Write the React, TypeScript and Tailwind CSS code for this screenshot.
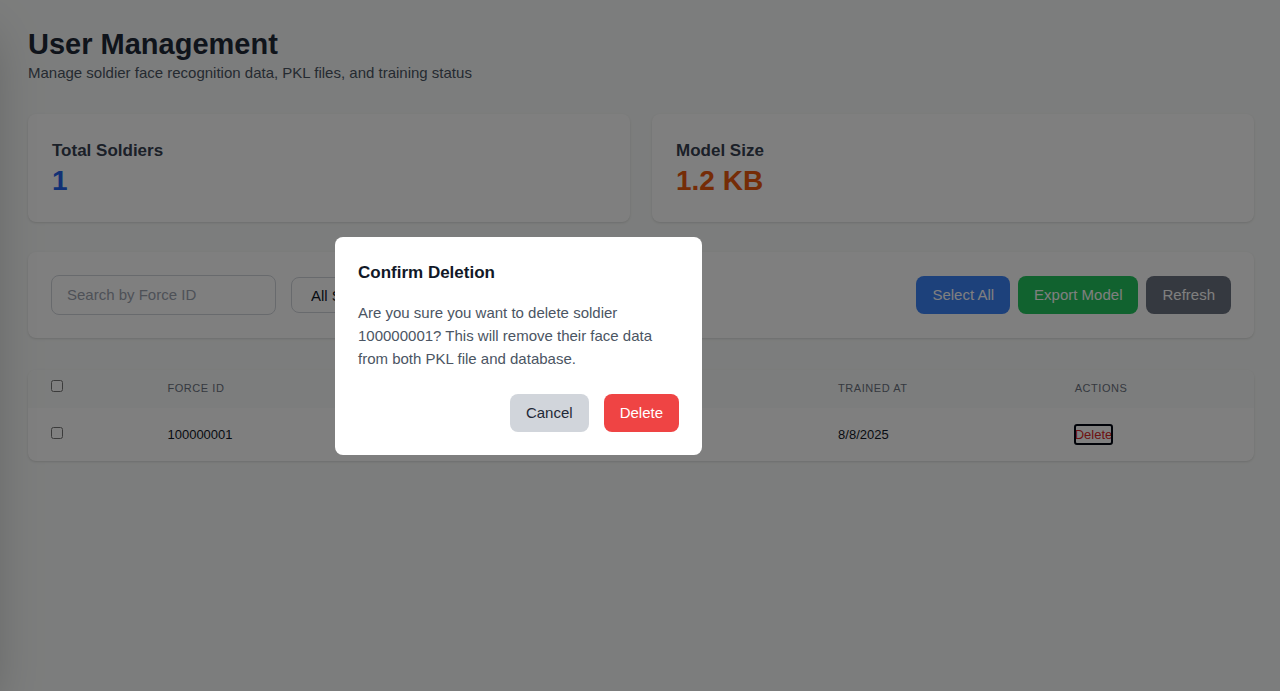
import { useState } from "react";

const card = "rounded-lg bg-white shadow";
const button = "h-[38px] rounded-lg px-4 text-[15px] leading-[22px]";

function StatCard({ label, value, tone }: { label: string; value: string; tone: string }) {
  return (
    <section className={`${card} p-6`}>
      <h2 className="text-[17px] leading-[26px] font-semibold text-[#374151]">{label}</h2>
      <p className={`text-[28px] leading-[34px] font-bold ${tone}`}>{value}</p>
    </section>
  );
}

const soldiers = [{ id: "100000001", status: "Trained", trainedAt: "8/8/2025" }];

export default function App() {
  const [search, setSearch] = useState("");
  const [open, setOpen] = useState(true);
  const th = "px-[23px] text-left text-[11px] font-normal uppercase tracking-wider text-[#6b7280]";
  const td = "px-[23px] text-[13px] text-[#111827]";

  return (
    <div className="relative min-h-screen overflow-hidden bg-[#f9fbfa] font-['Liberation_Sans',Arial,sans-serif]">
      <div className="absolute inset-y-0 right-full w-60 shadow-2xl" />
      <main className="pt-[26px] pr-[26px] pb-8 pl-7">
        <header>
          <h1 className="text-[29px] leading-9 font-bold text-[#1f2937]">User Management</h1>
          <p className="text-[15px] leading-[22px] text-[#4b5563]">
            Manage soldier face recognition data, PKL files, and training status
          </p>
        </header>

        <div className="mt-[30px] grid grid-cols-2 gap-[22px]">
          <StatCard label="Total Soldiers" value="1" tone="text-[#2563eb]" />
          <StatCard label="Model Size" value="1.2 KB" tone="text-[#ea580c]" />
        </div>

        <section className={`${card} mt-[30px] flex items-center justify-between p-[23px]`}>
          <div className="flex items-center gap-[15px]">
            <input
              type="text"
              aria-label="Search by Force ID"
              placeholder="Search by Force ID"
              value={search}
              onChange={(e) => setSearch(e.target.value)}
              className="h-10 w-[225px] rounded-lg border border-[#d1d5db] px-[15px] pb-0.5 text-[15px] placeholder:text-[#9ca3af]"
            />
            <select
              aria-label="Status"
              className="h-9 w-[140px] rounded-lg border border-[#d1d5db] bg-white px-[15px] text-[15px] text-[#111827]"
            >
              <option>All Status</option>
              <option>Trained</option>
            </select>
          </div>
          <div className="flex gap-2">
            <button type="button" className={`${button} bg-[#3b82f6] text-white`}>Select All</button>
            <button type="button" className={`${button} bg-[#22c55e] text-white`}>Export Model</button>
            <button type="button" className={`${button} bg-[#6b7280] text-white`}>Refresh</button>
          </div>
        </section>

        <section className={`${card} mt-8 overflow-hidden`}>
          <table className="w-full table-fixed">
            <colgroup>
              <col className="w-[9.5%]" />
              <col className="w-[27.5%]" />
              <col className="w-[27.2%]" />
              <col className="w-[19.3%]" />
              <col />
            </colgroup>
            <thead className="bg-[#f9fbfa]">
              <tr className="h-[38px]">
                <th className={`${th} pb-1.5`}>
                  <input type="checkbox" aria-label="Select all soldiers" className="block size-3" />
                </th>
                <th className={`${th} pb-0.5`}>Force ID</th>
                <th className={`${th} pb-0.5`}>Status</th>
                <th className={`${th} pb-0.5`}>Trained At</th>
                <th className={`${th} pb-0.5`}>Actions</th>
              </tr>
            </thead>
            <tbody>
              {soldiers.map((s) => (
                <tr key={s.id} className="h-[53px]">
                  <td className={`${td} pb-1`}>
                    <input type="checkbox" aria-label={`Select soldier ${s.id}`} className="block size-3" />
                  </td>
                  <td className={td}>{s.id}</td>
                  <td className={td}>{s.status}</td>
                  <td className={td}>{s.trainedAt}</td>
                  <td className={td}>
                    <button
                      type="button"
                      onClick={() => setOpen(true)}
                      className="rounded-xs text-[#dc2626] outline-2 -outline-offset-1 outline-gray-950"
                    >
                      Delete
                    </button>
                  </td>
                </tr>
              ))}
            </tbody>
          </table>
        </section>
      </main>

      {open && (
        <div className="fixed inset-y-0 right-0 -left-[243px] flex items-center justify-center bg-black/50">
          <div
            role="dialog"
            aria-modal="true"
            aria-labelledby="confirm-title"
            className="w-[367px] rounded-lg bg-white p-[23px]"
          >
            <h3 id="confirm-title" className="text-[17px] leading-[26px] font-semibold text-[#111827]">
              Confirm Deletion
            </h3>
            <p className="mt-[15px] text-[15px] leading-[23px] text-[#4b5563]">
              Are you sure you want to delete soldier 100000001? This will remove their face data from both PKL file
              and database.
            </p>
            <div className="mt-6 flex justify-end gap-[15px]">
              <button type="button" onClick={() => setOpen(false)} className={`${button} bg-[#d1d5db] text-[#1f2937]`}>
                Cancel
              </button>
              <button type="button" onClick={() => setOpen(false)} className={`${button} bg-[#ef4444] text-white`}>
                Delete
              </button>
            </div>
          </div>
        </div>
      )}
    </div>
  );
}
